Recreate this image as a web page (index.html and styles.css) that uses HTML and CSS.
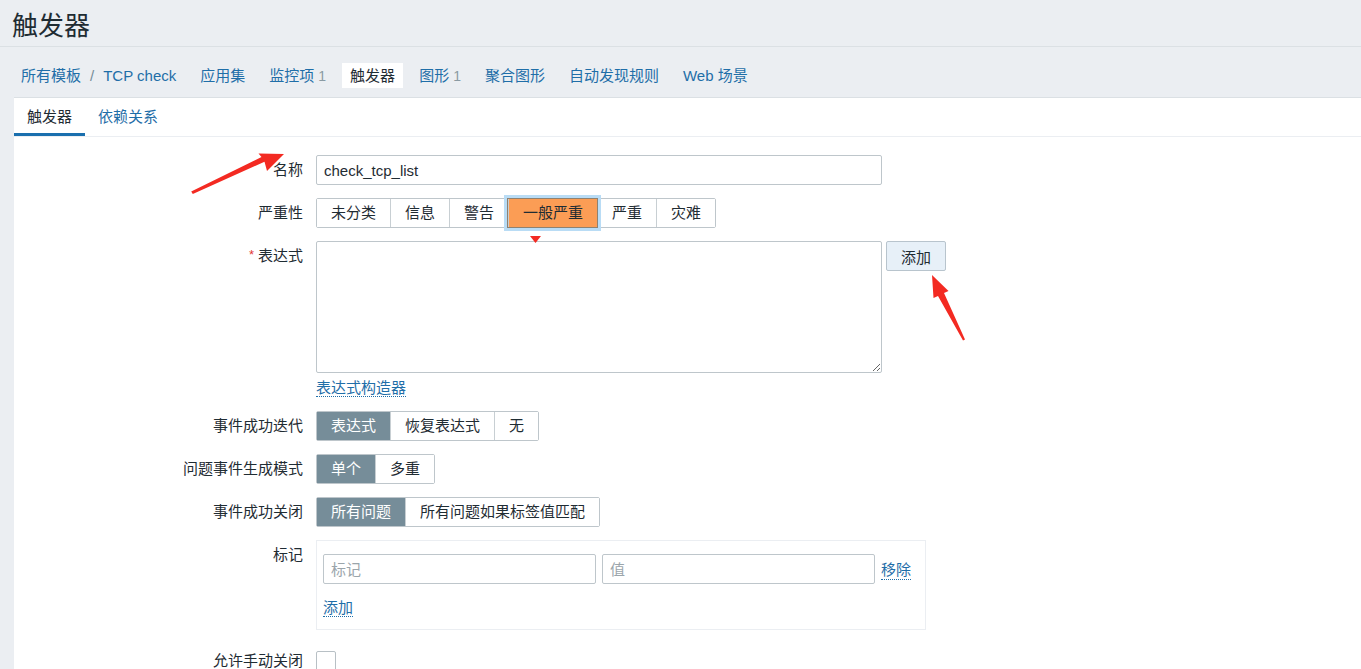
FILE: index.html
```html
<!DOCTYPE html>
<html lang="zh-CN">
<head>
<meta charset="utf-8">
<title>触发器</title>
<link rel="stylesheet" href="styles.css">
</head>
<body>
<header class="page-header">
  <h1 class="page-title">触发器</h1>
</header>
<nav class="host-nav">
  <span class="nav-item"><a class="link" href="#">所有模板</a><span class="crumb-sep">/</span><a class="link" href="#">TCP check</a></span>
  <span class="nav-item"><a class="link" href="#">应用集</a></span>
  <span class="nav-item"><a class="link" href="#">监控项</a><sup class="count">1</sup></span>
  <span class="nav-item nav-item-active">触发器</span>
  <span class="nav-item"><a class="link" href="#">图形</a><sup class="count">1</sup></span>
  <span class="nav-item"><a class="link" href="#">聚合图形</a></span>
  <span class="nav-item"><a class="link" href="#">自动发现规则</a></span>
  <span class="nav-item"><a class="link" href="#">Web 场景</a></span>
</nav>
<main class="panel">
  <div class="tabs">
    <span class="tab tab-active">触发器</span>
    <span class="tab"><a class="link" href="#">依赖关系</a></span>
  </div>
  <form class="form">
    <label class="form-label">名称</label>
    <div class="form-field"><input class="text-input name-input" type="text" value="check_tcp_list"></div>

    <label class="form-label">严重性</label>
    <div class="form-field">
      <div class="seg">
        <span class="seg-btn">未分类</span>
        <span class="seg-btn">信息</span>
        <span class="seg-btn">警告</span>
        <span class="seg-btn seg-average">一般严重</span>
        <span class="seg-btn">严重</span>
        <span class="seg-btn">灾难</span>
      </div>
    </div>

    <label class="form-label"><span class="required">*</span>表达式</label>
    <div class="form-field">
      <div class="expr-row">
        <textarea class="expr-area"></textarea>
        <button class="add-btn" type="button">添加</button>
      </div>
      <div class="expr-link"><a class="link dotted" href="#">表达式构造器</a></div>
    </div>

    <label class="form-label">事件成功迭代</label>
    <div class="form-field">
      <div class="seg">
        <span class="seg-btn seg-on">表达式</span>
        <span class="seg-btn">恢复表达式</span>
        <span class="seg-btn">无</span>
      </div>
    </div>

    <label class="form-label">问题事件生成模式</label>
    <div class="form-field">
      <div class="seg">
        <span class="seg-btn seg-on">单个</span>
        <span class="seg-btn">多重</span>
      </div>
    </div>

    <label class="form-label">事件成功关闭</label>
    <div class="form-field">
      <div class="seg">
        <span class="seg-btn seg-on">所有问题</span>
        <span class="seg-btn">所有问题如果标签值匹配</span>
      </div>
    </div>

    <label class="form-label">标记</label>
    <div class="form-field">
      <div class="tags-box">
        <div class="tag-row">
          <input class="text-input tag-input" type="text" placeholder="标记">
          <input class="text-input tag-input" type="text" placeholder="值">
          <a class="link dotted" href="#">移除</a>
        </div>
        <div class="tag-add"><a class="link dotted" href="#">添加</a></div>
      </div>
    </div>

    <label class="form-label form-label-check">允许手动关闭</label>
    <div class="form-field form-field-check"><span class="checkbox"></span></div>
  </form>
</main>

<svg class="annotations" width="1361" height="669" viewBox="0 0 1361 669" aria-hidden="true">
  <polygon fill="#f32a22" points="192.8,194 264.5,161.8 267,171 284,154 258.5,153.5 261.5,157 191.2,191.5"/>
  <polygon fill="#f32a22" points="965,339.5 944,293 948.5,291 932,275 933.5,298 938,296 963,340.5"/>
  <polygon fill="#f32a22" points="530,236 541,236 535.5,243"/>
</svg>
</body>
</html>
```

FILE: styles.css
```css
html, body {
  margin: 0;
  padding: 0;
  overflow: hidden;
  height: 669px;
}
body {
  background: #ebeef2;
  font-family: "Liberation Sans", "Noto Sans CJK SC", sans-serif;
  font-size: 15px;
  color: #1f2c33;
  position: relative;
}
.link {
  color: #1f6ea8;
  text-decoration: none;
}
.dotted {
  border-bottom: 1px dotted #1f6ea8;
}

.page-header {
  height: 46px;
  padding: 0 12px;
  border-bottom: 1px solid #dbe0e4;
}
.page-title {
  margin: 0;
  padding-top: 6px;
  font-size: 26px;
  line-height: 40px;
  font-weight: normal;
  color: #1f2c33;
}

.host-nav {
  display: flex;
  gap: 8px;
  padding: 16px 0 9px 13px;
  height: 25px;
}
.nav-item {
  display: flex;
  align-items: center;
  padding: 0 8px;
  height: 25px;
  line-height: 25px;
  white-space: nowrap;
}
.nav-item-active {
  background: #ffffff;
  color: #1f2c33;
}
.crumb-sep {
  color: #768d99;
  margin: 0 9px;
}
.count {
  font-size: 14px;
  color: #8a9aa3;
  margin-left: 4px;
  vertical-align: baseline;
  position: relative;
  top: 1px;
}

.panel {
  margin-left: 14px;
  background: #ffffff;
  border-top: 1px solid #dbe0e4;
  min-height: 600px;
}
.tabs {
  display: flex;
  border-bottom: 1px solid #ebeef2;
}
.tab {
  padding: 1px 13px 0;
  height: 34px;
  line-height: 35px;
  border-bottom: 3px solid transparent;
}
.tab-active {
  border-bottom-color: #1a6fae;
  color: #1f2c33;
}

.form {
  display: grid;
  grid-template-columns: 289px 1fr;
  column-gap: 13px;
  row-gap: 13px;
  padding-top: 18px;
}
.form-label {
  text-align: right;
  line-height: 30px;
  height: 30px;
  white-space: nowrap;
}
.required {
  color: #e33734;
  margin-right: 4px;
  font-size: 13px;
  position: relative;
  top: -2px;
}
.form-field {
  min-height: 30px;
}

.text-input {
  box-sizing: border-box;
  height: 30px;
  border: 1px solid #bec6cb;
  border-radius: 2px;
  padding: 0 7px;
  font-family: "Liberation Sans", "Noto Sans CJK SC", sans-serif;
  font-size: 15px;
  color: #1f2c33;
  background: #ffffff;
  outline: none;
}
.text-input::placeholder {
  color: #9ba5ab;
}
.name-input {
  width: 566px;
  display: block;
}

.seg {
  display: inline-flex;
  height: 30px;
  box-sizing: border-box;
  border: 1px solid #bec6cb;
  border-radius: 2px;
}
.seg-btn {
  padding: 0 14px;
  line-height: 28px;
  height: 28px;
  border-left: 1px solid #c8cfd3;
  white-space: nowrap;
  background: #ffffff;
}
.seg-btn:first-child {
  border-left: none;
}
.seg-on {
  background: #768d99;
  color: #ffffff;
}
.seg-average {
  background: #fb9d55;
  color: #1f2c33;
  position: relative;
  z-index: 1;
  box-shadow: 0 0 0 1px #8d8272, 0 0 0 4px #b9dcf5;
}

.expr-row {
  display: flex;
  align-items: flex-start;
  gap: 4px;
}
.expr-area {
  box-sizing: border-box;
  width: 566px;
  height: 132px;
  border: 1px solid #bec6cb;
  border-radius: 2px;
  margin: 0;
  display: block;
  outline: none;
}
.add-btn {
  box-sizing: border-box;
  width: 60px;
  height: 30px;
  background: #e7f0f8;
  border: 1px solid #b8c4cd;
  border-radius: 2px;
  font-family: "Liberation Sans", "Noto Sans CJK SC", sans-serif;
  font-size: 15px;
  color: #1f2c33;
  padding: 0;
}
.expr-link {
  margin-top: 5px;
  line-height: 20px;
}

.tags-box {
  box-sizing: border-box;
  width: 610px;
  border: 1px solid #ebeef2;
  padding: 13px 6px 10px;
}
.tag-row {
  display: flex;
  align-items: center;
  gap: 6px;
}
.tag-input {
  width: 273px;
}
.tag-add {
  margin-top: 13px;
  line-height: 22px;
}

.form-label-check,
.form-field-check {
  margin-top: 3px;
}
.form-field-check {
  display: flex;
  align-items: center;
  height: 30px;
}
.checkbox {
  display: block;
  box-sizing: border-box;
  width: 20px;
  height: 20px;
  border: 1px solid #b8c0c5;
  border-radius: 2px;
  background: #ffffff;
}

.annotations {
  position: absolute;
  top: 0;
  left: 0;
  pointer-events: none;
}
```
